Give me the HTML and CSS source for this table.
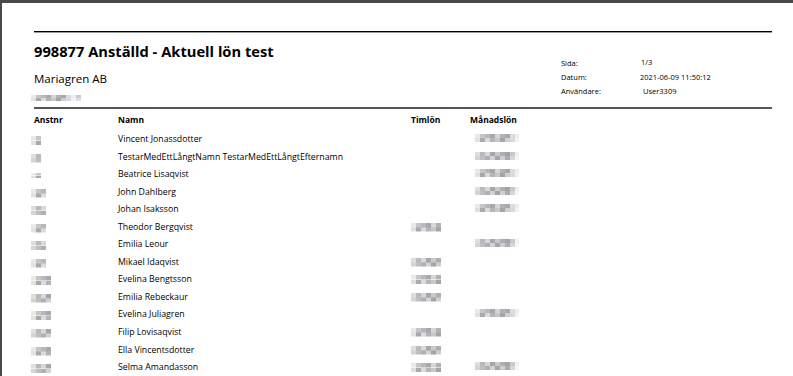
FILE: index.html
```html
<!DOCTYPE html>
<html lang="sv">
<head>
<meta charset="utf-8">
<title>998877 Anställd - Aktuell lön test</title>
<link rel="stylesheet" href="styles.css">
</head>
<body>
<div class="viewer">
  <div class="page">
    <div class="report">
      <div class="rule-top"></div>
      <div class="head">
        <div class="head-left">
          <h1 class="title">998877 Anställd - Aktuell lön test</h1>
          <div class="company">Mariagren AB</div>
          <div class="mz mz-org"></div>
        </div>
        <dl class="meta">
          <dt>Sida:</dt><dd class="v-page">1/3</dd>
          <dt>Datum:</dt><dd>2021-06-09 11:50:12</dd>
          <dt>Användare:</dt><dd class="v-user">User3309</dd>
        </dl>
      </div>
      <div class="rule-mid"></div>
      <div class="table">
        <div class="row row-head">
          <div>Anstnr</div><div>Namn</div><div>Timlön</div><div>Månadslön</div>
        </div>
        <div class="body">
          <div class="row"><div><span class="mz mz-id w10"></span></div><div>Vincent Jonassdotter</div><div></div><div><span class="mz mz-sal"></span></div></div>
          <div class="row"><div><span class="mz mz-id w10 alt"></span></div><div>TestarMedEttLångtNamn TestarMedEttLångtEfternamn</div><div></div><div><span class="mz mz-sal alt"></span></div></div>
          <div class="row"><div><span class="mz mz-id w10 thin"></span></div><div>Beatrice Lisaqvist</div><div></div><div><span class="mz mz-sal"></span></div></div>
          <div class="row"><div><span class="mz mz-id w15"></span></div><div>John Dahlberg</div><div></div><div><span class="mz mz-sal alt"></span></div></div>
          <div class="row"><div><span class="mz mz-id w15 alt"></span></div><div>Johan Isaksson</div><div></div><div><span class="mz mz-sal"></span></div></div>
          <div class="row"><div><span class="mz mz-id w15"></span></div><div>Theodor Bergqvist</div><div><span class="mz mz-hour"></span></div><div></div></div>
          <div class="row"><div><span class="mz mz-id w15 alt"></span></div><div>Emilia Leour</div><div></div><div><span class="mz mz-sal alt"></span></div></div>
          <div class="row"><div><span class="mz mz-id w15"></span></div><div>Mikael Idaqvist</div><div><span class="mz mz-hour alt"></span></div><div></div></div>
          <div class="row"><div><span class="mz mz-id w20"></span></div><div>Evelina Bengtsson</div><div><span class="mz mz-hour"></span></div><div></div></div>
          <div class="row"><div><span class="mz mz-id w20 alt"></span></div><div>Emilia Rebeckaur</div><div><span class="mz mz-hour alt"></span></div><div></div></div>
          <div class="row"><div><span class="mz mz-id w20"></span></div><div>Evelina Juliagren</div><div></div><div><span class="mz mz-sal"></span></div></div>
          <div class="row"><div><span class="mz mz-id w20 alt"></span></div><div>Filip Lovisaqvist</div><div><span class="mz mz-hour"></span></div><div></div></div>
          <div class="row"><div><span class="mz mz-id w20"></span></div><div>Ella Vincentsdotter</div><div><span class="mz mz-hour alt"></span></div><div></div></div>
          <div class="row"><div><span class="mz mz-id w20 alt"></span></div><div>Selma Amandasson</div><div><span class="mz mz-hour"></span></div><div><span class="mz mz-sal alt"></span></div></div>
        </div>
      </div>
    </div>
  </div>
</div>
</body>
</html>
```

FILE: styles.css
```css
* { box-sizing: border-box; }
html, body { margin: 0; padding: 0; background: #ffffff; }
body { font-family: "Open Sans", "Noto Sans", sans-serif; color: #000000; }

.viewer {
  width: 793px;
  height: 376px;
  overflow: hidden;
  border-top: 3px solid #47494c;
  border-left: 2px solid #47494c;
}
.page { background: #ffffff; height: 100%; }
.report { margin-left: 32px; width: 738px; padding-top: 28px; }

.rule-top { height: 2px; border-top: 1px solid #000000; border-bottom: 1px solid #9a9a9a; }
.rule-mid { height: 2px; background: #555555; }

.head { display: grid; grid-template-columns: 527px 1fr; height: 74px; }
.head-left { display: flex; flex-direction: column; align-items: flex-start; }
.title { margin: 8px 0 0; font-size: 14.7px; line-height: 20px; font-weight: 700; }
.company { margin-top: 10px; font-size: 11.5px; line-height: 15px; }

.mz {
  display: block;
  background-image:
    linear-gradient(to right, #ece8e2 0 5px, #c7c5c8 5px 10px, #b8b7bb 10px 15px, #a9a8ad 15px 20px, #d4d6da 20px 25px, #b3b1b3 25px 30px, #a8a8ac 30px 35px, #dcdde0 35px 40px, #e9eef4 40px 45px, #c9cbd0 45px 50px),
    linear-gradient(to right, #e3e1de 0 5px, #a9a8ac 5px 10px, #dcdadc 10px 15px, #b5b4b8 15px 20px, #c6c7cb 20px 25px, #a5a3a6 25px 30px, #cfd0d4 30px 35px, #d9d9dc 35px 40px, #f1f4f7 40px 45px, #dedfe2 45px 50px);
  background-size: 100% 50%, 100% 50%;
  background-position: left top, left bottom;
  background-repeat: no-repeat;
}
.mz.alt {
  background-image:
    linear-gradient(to right, #e2ddd8 0 5px, #b8b9bb 5px 10px, #d7d7da 10px 15px, #a6a5a9 15px 20px, #c8cace 20px 25px, #b0aeb1 25px 30px, #a3a3a8 30px 35px, #c8c9cd 35px 40px, #eaf1f7 40px 45px, #c9cbd0 45px 50px),
    linear-gradient(to right, #d8d3cf 0 5px, #bfbfc2 5px 10px, #b0afb3 10px 15px, #d2d3d6 15px 20px, #a4a3a7 20px 25px, #cfcfd2 25px 30px, #acabaf 30px 35px, #d6d6d9 35px 40px, #f4f6f9 40px 45px, #dedfe2 45px 50px);
}
.mz-org { width: 50px; height: 6px; margin: 9px 0 0 -3px; }
.mz-id { height: 9px; margin: 5px 0 0 -3px; }
.mz-id.thin { height: 5px; margin-top: 7px; }
.w10 { width: 10px; }
.w15 { width: 15px; }
.w20 { width: 20px; }
.mz-hour { width: 30px; height: 9px; margin-top: 4px; }
.mz-sal { width: 44px; height: 8px; margin: 3px 0 0 5px; }

.meta {
  margin: 23px 0 0;
  display: grid;
  grid-template-columns: 79px auto;
  grid-auto-rows: 14px;
  font-size: 7.5px;
  line-height: 14px;
  align-content: start;
}
.meta dt, .meta dd { margin: 0; white-space: nowrap; }
.v-page { position: relative; top: -1px; padding-left: 1px; }
.v-user { padding-left: 3px; }

.table { font-size: 8.75px; margin-top: 2px; }
.row {
  display: grid;
  grid-template-columns: 84px 293px 59px 1fr;
  height: 17.54px;
  line-height: 17.54px;
  white-space: nowrap;
}
.row-head { font-weight: 700; font-size: 8.5px; }
.body { margin-top: 2.6px; }
```
